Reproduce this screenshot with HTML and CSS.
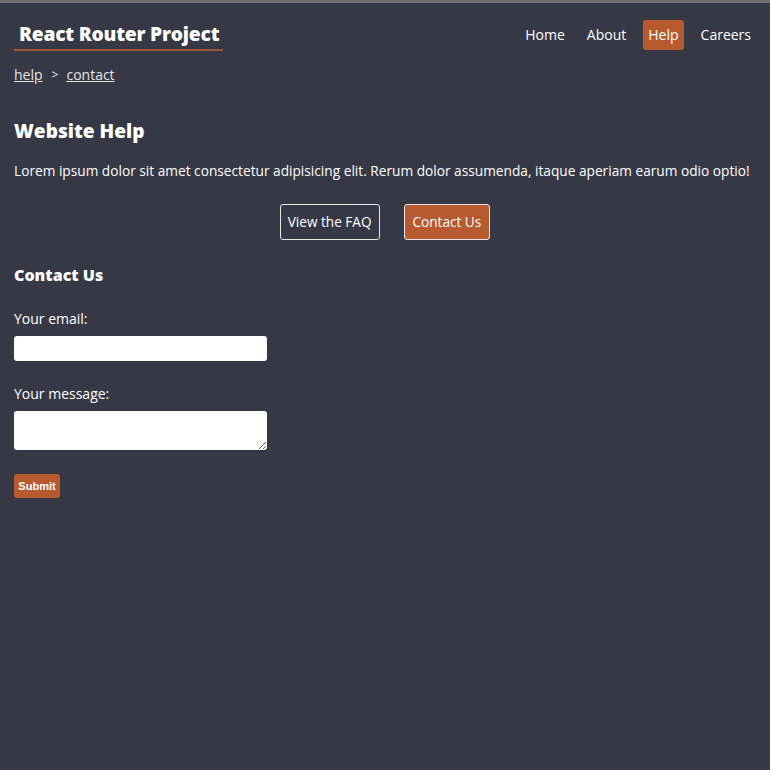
FILE: index.html
```html
<!DOCTYPE html>
<html>
<head>
<meta charset="utf-8">
<link rel="stylesheet" href="styles.css">
</head>
<body>
<div class="root">
  <header class="header">
    <h1 class="brand">React Router Project</h1>
    <nav class="nav">
      <a class="nav-link">Home</a>
      <a class="nav-link">About</a>
      <a class="nav-link active">Help</a>
      <a class="nav-link">Careers</a>
    </nav>
  </header>
  <div class="crumbs">
    <a class="crumb">help</a><span class="sep">&gt;</span><a class="crumb">contact</a>
  </div>
  <main class="main">
    <h2 class="title">Website Help</h2>
    <p class="lead">Lorem ipsum dolor sit amet consectetur adipisicing elit. Rerum dolor assumenda, itaque aperiam earum odio optio!</p>
    <div class="actions">
      <a class="btn">View the FAQ</a>
      <a class="btn primary">Contact Us</a>
    </div>
    <h3 class="subtitle">Contact Us</h3>
    <form class="form">
      <label class="field">
        <span class="label">Your email:</span>
        <input class="input" type="email">
      </label>
      <label class="field">
        <span class="label">Your message:</span>
        <textarea class="textarea"></textarea>
      </label>
      <button class="submit" type="button">Submit</button>
    </form>
  </main>
</div>
</body>
</html>
```
FILE: styles.css
```css
* { box-sizing: border-box; }
html, body { margin: 0; padding: 0; }
body {
  background: #363845;
  color: #ffffff;
  font-family: "Open Sans", "DejaVu Sans", sans-serif;
  font-size: 14px;
  border-top: 3px solid #6f6f6f;
  min-height: 770px;
}
.root { padding: 0 14px; }
.header {
  display: flex;
  justify-content: space-between;
  align-items: center;
  padding-top: 16px;
}
.brand {
  margin: 0;
  font-size: 19.2px;
  font-weight: 800;
  line-height: 29px;
  padding: 0 4px 1px 5px;
  border-bottom: 2px solid #9a5638;
  letter-spacing: -0.2px;
}
.nav { display: flex; gap: 12px; }
.nav-link {
  color: #fff;
  padding: 0 5px;
  line-height: 30px;
  border-radius: 3px;
  text-decoration: none;
}
.nav-link.active { background: #b75a2f; }
.crumbs {
  margin-top: 14px;
  display: flex;
  align-items: center;
  line-height: 20px;
  color: #e4e4e4;
}
.crumb { color: #e4e4e4; text-decoration: underline; }
.sep { margin: 0 8px 0 9px; font-size: 12px; }
.main { padding-top: 31px; }
.title {
  margin: 0;
  font-size: 19.1px;
  font-weight: 800;
  line-height: 30px;
}
.lead {
  margin: 14px 0 0;
  line-height: 22px;
  font-size: 13.7px;
  white-space: nowrap;
}
.actions {
  display: flex;
  justify-content: center;
  gap: 24px;
  margin-top: 22px;
}
.btn {
  color: #fff;
  border: 1px solid #e6e6e6;
  border-radius: 3px;
  padding: 0 7px;
  line-height: 34px;
  font-size: 13.6px;
}
.btn.primary { background: #b75a2f; padding: 0 8px; }
.subtitle {
  margin: 24px 0 0;
  font-size: 16px;
  font-weight: 800;
  line-height: 22px;
}
.form { margin-top: 23px; display: flex; flex-direction: column; align-items: flex-start; }
.field { display: flex; flex-direction: column; margin-bottom: 23px; }
.label { line-height: 20px; margin-bottom: 7px; }
.input {
  width: 253px;
  height: 25px;
  border: none;
  border-radius: 3px;
  background: #fff;
}
.textarea {
  width: 253px;
  height: 39px;
  border: none;
  border-radius: 3px;
  background: #fff;
  resize: vertical;
}
.submit {
  margin-top: 1px;
  background: #b75a2f;
  color: #fff;
  border: none;
  border-radius: 3px;
  font-family: "Liberation Sans", Arial, sans-serif;
  font-size: 11px;
  font-weight: bold;
  height: 24px;
  width: 46px;
  padding: 0;
}
```
